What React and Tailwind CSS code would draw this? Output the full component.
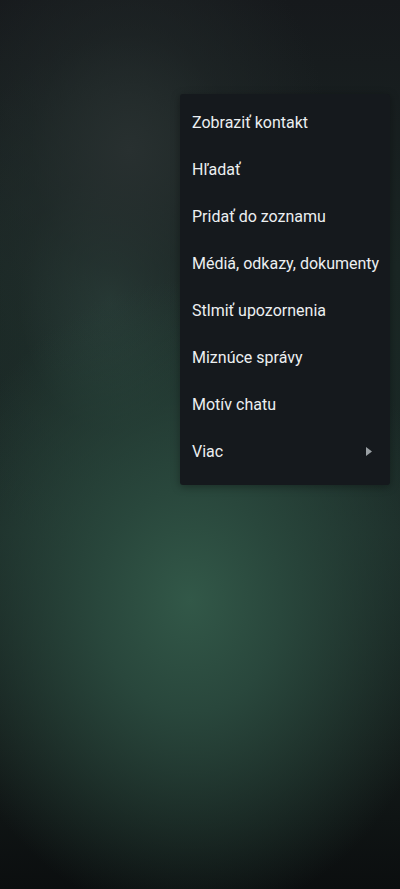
import { useState } from "react";

const items = [
    "Zobraziť kontakt",
    "Hľadať",
    "Pridať do zoznamu",
    "Médiá, odkazy, dokumenty",
    "Stlmiť upozornenia",
    "Miznúce správy",
    "Motív chatu",
];

export default function App() {
    const [open] = useState(true);

    return (
        <div
            className="relative w-[400px] h-[889px] overflow-hidden bg-[#111517]"
            style={{ fontFamily: "Roboto, 'Noto Sans', sans-serif" }}
        >
            {/* blurred wallpaper */}
            <div className="absolute inset-0 bg-[radial-gradient(ellipse_260px_320px_at_190px_600px,#325848_0%,#29473c_35%,rgba(26,40,36,0)_100%),radial-gradient(ellipse_200px_240px_at_130px_150px,#283030_0%,rgba(34,42,42,0.5)_50%,rgba(20,26,28,0)_100%),radial-gradient(ellipse_180px_260px_at_110px_300px,#29403a_0%,rgba(30,46,42,0.6)_50%,rgba(20,26,28,0)_100%),linear-gradient(180deg,#16191c_0%,#1a2624_30%,#1b2a27_60%,#131a19_84%,#0b0e0f_100%)]" />

            {open && (
                <div className="absolute left-[180px] top-[94px] w-[210px] rounded-[3px] bg-[#15191d] pt-[5px] pb-[10px] shadow-[0_2px_8px_rgba(0,0,0,0.35)]">
                    {items.map((label) => (
                        <div
                            key={label}
                            className="flex h-[47px] items-center pl-[12px] text-[16px] text-[#eceff1] whitespace-nowrap"
                        >
                            {label}
                        </div>
                    ))}
                    <div className="flex h-[47px] items-center justify-between pl-[12px] pr-[18px] text-[16px] text-[#eceff1]">
                        <span>Viac</span>
                        <svg width="6" height="9" viewBox="0 0 6 9" aria-hidden="true">
                            <path d="M0 0 L6 4.5 L0 9 Z" fill="#9aa0a4" />
                        </svg>
                    </div>
                </div>
            )}
        </div>
    );
}
